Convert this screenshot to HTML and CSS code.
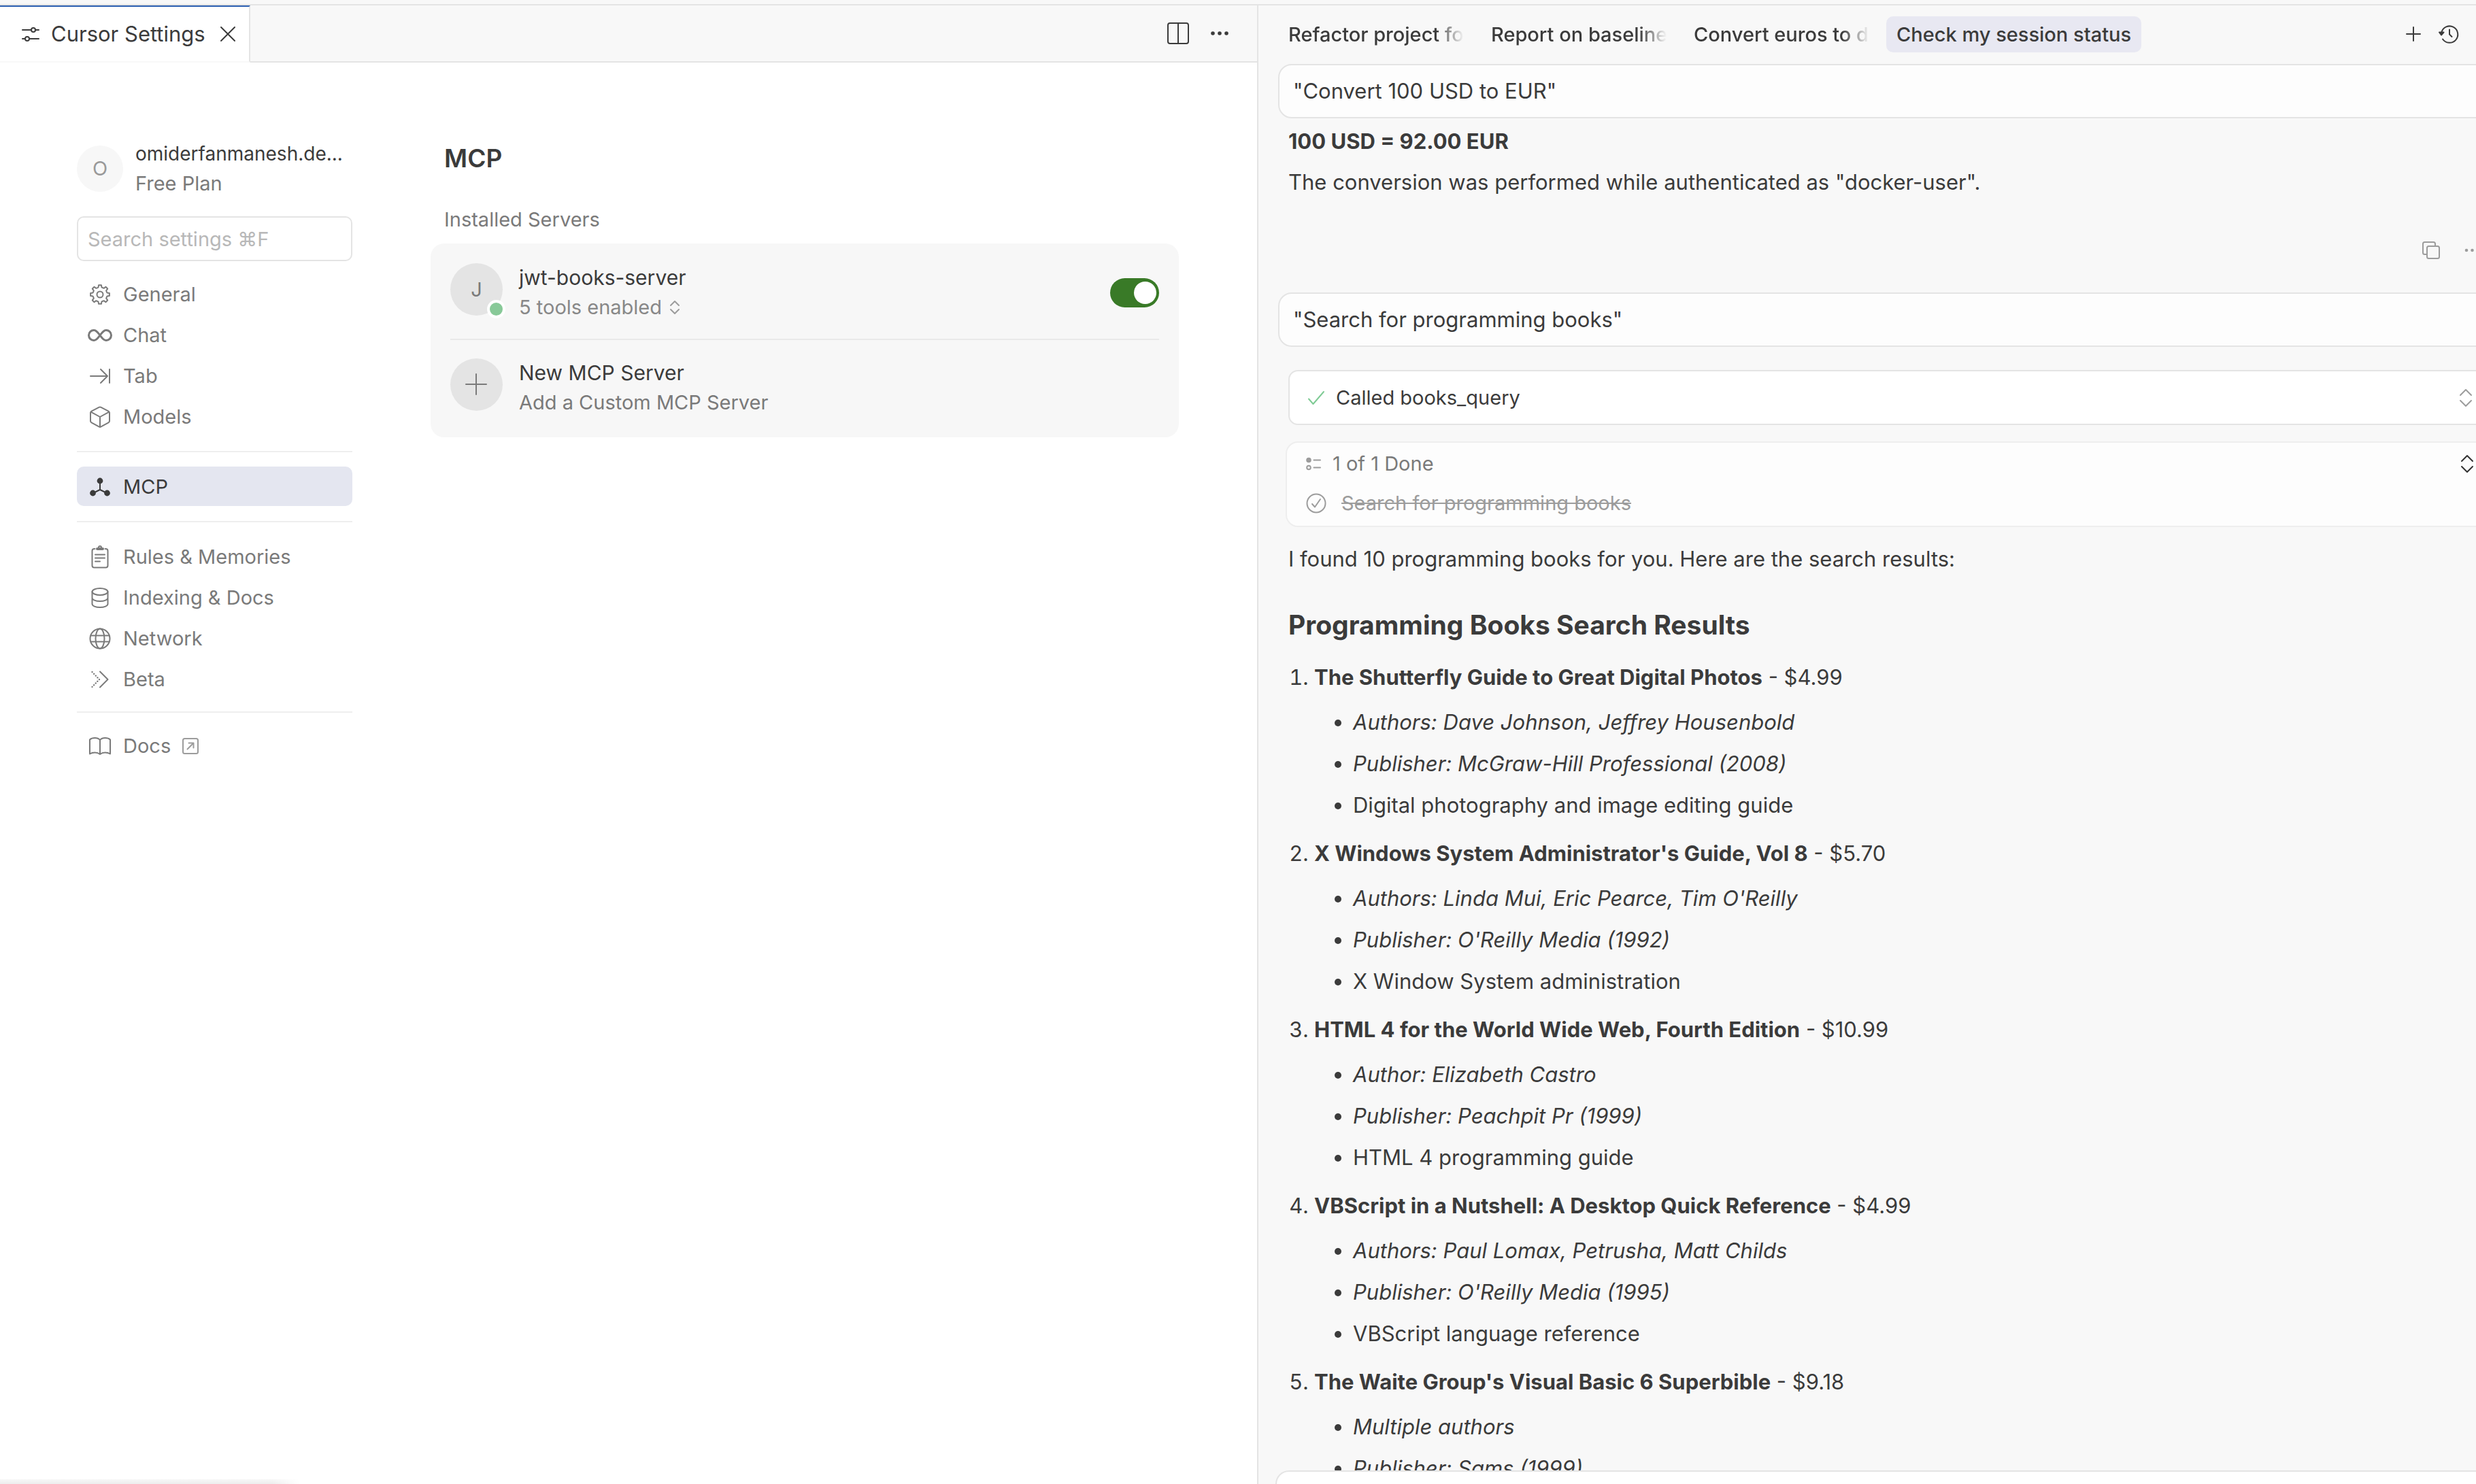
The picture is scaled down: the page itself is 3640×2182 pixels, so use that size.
FILE: index.html
```html
<!DOCTYPE html>
<html lang="en">
<head>
<meta charset="utf-8">
<title>Cursor Settings</title>
<link rel="stylesheet" href="styles.css">
</head>
<body>
<div class="titlebar"></div>
<div class="workbench">
  <section class="editor">
    <header class="tabbar">
      <div class="tab">
        <svg class="icon" width="26" height="26" viewBox="0 0 26 26"><path d="M1 7h13M20 7h5M1 20h4M11 20h14"/><circle cx="17" cy="7" r="3"/><circle cx="8" cy="20" r="3"/></svg>
        <span>Cursor Settings</span>
        <button class="icon-btn" aria-label="Close tab"><svg class="icon" width="22" height="22" viewBox="0 0 22 22"><path d="M1 1l20 20M21 1L1 21"/></svg></button>
      </div>
      <div class="tab-actions">
        <button class="icon-btn" aria-label="Split editor"><svg class="icon" width="32" height="32" viewBox="0 0 32 32"><rect x="1" y="1" width="30" height="30" rx="3"/><path d="M16 1v30"/></svg></button>
        <button class="icon-btn" aria-label="More actions"><svg class="icon-fill" width="28" height="8" viewBox="0 0 28 8"><circle cx="4" cy="4" r="2.800"/><circle cx="14" cy="4" r="2.800"/><circle cx="24" cy="4" r="2.800"/></svg></button>
      </div>
    </header>
    <div class="settings">
      <aside class="sidebar">
        <div class="profile">
          <div class="avatar">O</div>
          <div class="profile-text">
            <div class="profile-name">omiderfanmanesh.de...</div>
            <div class="profile-plan">Free Plan</div>
          </div>
        </div>
        <input class="search" type="text" placeholder="Search settings ⌘F" aria-label="Search settings">
        <nav class="nav">
          <a class="nav-item" href="#general"><span class="nav-icon"><svg class="icon" width="30" height="30" viewBox="0 0 30 30"><path d="M12.57 4.48L13.05 1.14H16.95L17.43 4.48Q19.5 5.6 20.72 5.84L23.43 3.82L26.18 6.57L24.16 9.28Q24.5 11 25.52 12.57L28.86 13.05V16.95L25.52 17.43Q24.4 19.5 24.16 20.72L26.18 23.43L23.43 26.18L20.72 24.16Q19 24.5 17.43 25.52L16.95 28.86H13.05L12.57 25.52Q10.5 24.4 9.28 24.16L6.57 26.18L3.82 23.43L5.84 20.72Q5.5 19 4.48 17.43L1.14 16.95V13.05L4.48 12.57Q5.6 10.5 5.84 9.28L3.82 6.57L6.57 3.82L9.28 5.84Q11 5.5 12.57 4.48Z"/><circle cx="15" cy="15" r="4.5"/></svg></span>General</a>
          <a class="nav-item" href="#chat"><span class="nav-icon"><svg class="icon icon-heavy" width="36" height="20" viewBox="0 0 36 20"><path d="M18 10C14.5 5.500 12.500 2.500 9 2.500C5 2.500 1.500 5.500 1.500 10S5 17.500 9 17.500C12.500 17.500 14.500 14.500 18 10C21.500 5.500 23.500 2.500 27 2.500C31 2.500 34.500 5.500 34.500 10S31 17.500 27 17.500C23.500 17.500 21.500 14.500 18 10Z"/></svg></span>Chat</a>
          <a class="nav-item" href="#tab"><span class="nav-icon"><svg class="icon" width="30" height="24" viewBox="0 0 30 24"><path d="M1 12h25M16 2l10 10-10 10M29 2v20"/></svg></span>Tab</a>
          <a class="nav-item" href="#models"><span class="nav-icon"><svg class="icon" width="30" height="32" viewBox="0 0 30 32"><path d="M13.500 1.800L2.500 7.600Q1 8.500 1 10V22Q1 23.500 2.500 24.400L13.500 30.400Q15 31.200 16.500 30.400L27.500 24.400Q29 23.500 29 22V10Q29 8.500 27.500 7.600L16.500 1.800Q15 1 13.500 1.800ZM2 8.800L15 16L28 8.800M15 16V31"/></svg></span>Models</a>
          <hr class="rule">
          <a class="nav-item nav-item-active" href="#mcp"><span class="nav-icon"><svg class="icon-node" width="30" height="28" viewBox="0 0 30 28"><path d="M15 5v13M15 18l-10 5M15 18l10 5"/><circle cx="15" cy="5" r="3.400"/><circle cx="4.500" cy="23" r="3.400"/><circle cx="25.500" cy="23" r="3.400"/></svg></span>MCP</a>
          <hr class="rule">
          <a class="nav-item" href="#rules"><span class="nav-icon"><svg class="icon" width="26" height="34" viewBox="0 0 26 34"><path d="M5.500 5H4.500Q1.500 5 1.500 8V29.500Q1.500 32.500 4.500 32.500H21.500Q24.500 32.500 24.500 29.500V8Q24.500 5 21.500 5H20.500M6 13.500h14M6 18.500h14M6 23.500h7"/><path d="M9 5h8" stroke-width="4"/><circle cx="13" cy="3" r="2"/></svg></span>Rules &amp; Memories</a>
          <a class="nav-item" href="#indexing"><span class="nav-icon"><svg class="icon" width="26" height="30" viewBox="0 0 26 30"><ellipse cx="13" cy="6" rx="11.500" ry="5"/><path d="M1.500 6V24C1.500 26.800 6.600 29 13 29S24.500 26.800 24.500 24V6M1.500 15C1.500 17.800 6.600 20 13 20S24.500 17.800 24.500 15"/></svg></span>Indexing &amp; Docs</a>
          <a class="nav-item" href="#network"><span class="nav-icon"><svg class="icon" width="32" height="32" viewBox="0 0 32 32"><circle cx="16" cy="16" r="14.500"/><ellipse cx="16" cy="16" rx="6.500" ry="14.500"/><path d="M2.500 11.500h27M2.500 20.500h27"/></svg></span>Network</a>
          <a class="nav-item" href="#beta"><span class="nav-icon"><svg class="icon" width="26" height="26" viewBox="0 0 26 26"><path d="M13 1.500L24.500 13L13 24.500"/><path d="M1.500 2L12 13L1.500 24" stroke-width="2.400" stroke-dasharray="0.100 3.700"/></svg></span>Beta</a>
          <hr class="rule rule-tight">
          <a class="nav-item" href="#docs"><span class="nav-icon"><svg class="icon" width="32" height="26" viewBox="0 0 32 26"><path d="M16 4Q13.500 1 8.500 1T1 3.500V24.500Q4 22.500 8.500 22.500T16 25Q19 22.500 23.500 22.500T31 24.500V3.500Q28.500 1 23.500 1T16 4V25"/></svg></span>Docs <svg class="icon icon-faint" width="24" height="24" viewBox="0 0 24 24"><rect x="1" y="1" width="22" height="22" rx="2.500"/><path d="M7.500 16.500L16 8M9.500 7.500H16.500V14.500"/></svg></a>
        </nav>
      </aside>
      <main class="content">
        <h1 class="title">MCP</h1>
        <h2 class="subtitle">Installed Servers</h2>
        <div class="card">
          <div class="server">
            <div class="server-avatar">J<span class="status-dot"></span></div>
            <div class="server-text">
              <div class="server-name">jwt-books-server</div>
              <button class="server-sub server-tools">5 tools enabled <svg class="icon icon-faint" width="14" height="20" viewBox="0 0 14 20"><path d="M1 7l6-6 6 6M1 13l6 6 6-6"/></svg></button>
            </div>
            <input class="toggle" type="checkbox" role="switch" aria-label="Enable jwt-books-server" checked>
          </div>
          <div class="server">
            <div class="server-avatar"><svg class="icon" width="32" height="32" viewBox="0 0 32 32"><path d="M15 0v30M0 15h30"/></svg></div>
            <div class="server-text">
              <div class="server-name">New MCP Server</div>
              <div class="server-sub">Add a Custom MCP Server</div>
            </div>
          </div>
        </div>
      </main>
    </div>
    <div class="hover-shadow"></div>
  </section>

  <section class="chat">
    <header class="chat-tabs">
      <button class="chat-tab"><span class="fade">Refactor project fo</span></button>
      <button class="chat-tab"><span class="fade">Report on baseline</span></button>
      <button class="chat-tab"><span class="fade">Convert euros to d</span></button>
      <button class="chat-tab chat-tab-active">Check my session status</button>
      <div class="chat-actions">
        <button class="icon-btn" aria-label="New chat"><svg class="icon" width="22" height="22" viewBox="0 0 22 22"><path d="M11 1v20M1 11h20"/></svg></button>
        <button class="icon-btn" aria-label="Chat history"><svg class="icon" width="30" height="28" viewBox="0 0 30 28"><path d="M4.300 11.500A12.200 12.200 0 1 1 6 21.500M16 7.500V14.500L19.500 18"/><path class="arrow" d="M1 11.500H7.500L4 15.500Z"/></svg></button>
      </div>
    </header>
    <div class="stream">
      <div class="prompt">"Convert 100 USD to EUR"</div>
      <div class="answer">
        <p><strong>100 USD = 92.00 EUR</strong></p>
        <p>The conversion was performed while authenticated as "docker-user".</p>
      </div>
      <div class="answer-actions">
        <button class="icon-btn" aria-label="Copy"><svg class="icon icon-faint" width="26" height="26" viewBox="0 0 26 26"><rect x="7" y="7" width="18" height="18" rx="2.500"/><path d="M7 19H3.500Q1 19 1 16.500V3.500Q1 1 3.500 1H16.500Q19 1 19 3.500V7"/></svg></button>
        <button class="icon-btn" aria-label="More"><svg class="icon-fill icon-faint" width="24" height="8" viewBox="0 0 24 8"><circle cx="3" cy="4" r="2.300"/><circle cx="11.500" cy="4" r="2.300"/><circle cx="20" cy="4" r="2.300"/></svg></button>
      </div>
      <div class="prompt">"Search for programming books"</div>
      <div class="tool-call">
        <svg class="icon icon-ok" width="24" height="20" viewBox="0 0 24 20"><path d="M1 11.500L7.500 19L23 1"/></svg>
        <span>Called books_query</span>
        <button class="icon-btn push" aria-label="Expand tool call"><svg class="icon icon-faint" width="18" height="26" viewBox="0 0 18 26"><path d="M1 9l8-8 8 8M1 17l8 8 8-8"/></svg></button>
      </div>
      <div class="todo">
        <div class="todo-row todo-head">
          <svg class="icon icon-faint" width="22" height="20" viewBox="0 0 22 20"><circle class="solid" cx="4" cy="4.500" r="2.800"/><circle cx="4" cy="15.500" r="2.800"/><path d="M11.500 4.500h9.500M11.500 15.500h9.500"/></svg>
          <span>1 of 1 Done</span>
          <button class="icon-btn push" aria-label="Collapse to-do list"><svg class="icon icon-dark" width="18" height="26" viewBox="0 0 18 26"><path d="M1 9l8-8 8 8M1 17l8 8 8-8"/></svg></button>
        </div>
        <div class="todo-row todo-done">
          <svg class="icon" width="30" height="30" viewBox="0 0 30 30"><circle cx="15" cy="15" r="13.500"/><path d="M9 16l4 4.500 8-11.500"/></svg>
          <s>Search for programming books</s>
        </div>
      </div>
      <div class="answer answer-long">
        <p>I found 10 programming books for you. Here are the search results:</p>
        <h3>Programming Books Search Results</h3>
        <ol>
          <li><strong>The Shutterfly Guide to Great Digital Photos</strong> - $4.99
            <ul><li><em>Authors: Dave Johnson, Jeffrey Housenbold</em></li><li><em>Publisher: McGraw-Hill Professional (2008)</em></li><li>Digital photography and image editing guide</li></ul></li>
          <li><strong>X Windows System Administrator's Guide, Vol 8</strong> - $5.70
            <ul><li><em>Authors: Linda Mui, Eric Pearce, Tim O'Reilly</em></li><li><em>Publisher: O'Reilly Media (1992)</em></li><li>X Window System administration</li></ul></li>
          <li><strong>HTML 4 for the World Wide Web, Fourth Edition</strong> - $10.99
            <ul><li><em>Author: Elizabeth Castro</em></li><li><em>Publisher: Peachpit Pr (1999)</em></li><li>HTML 4 programming guide</li></ul></li>
          <li><strong>VBScript in a Nutshell: A Desktop Quick Reference</strong> - $4.99
            <ul><li><em>Authors: Paul Lomax, Petrusha, Matt Childs</em></li><li><em>Publisher: O'Reilly Media (1995)</em></li><li>VBScript language reference</li></ul></li>
          <li><strong>The Waite Group's Visual Basic 6 Superbible</strong> - $9.18
            <ul><li><em>Multiple authors</em></li><li><em>Publisher: Sams (1999)</em></li></ul></li>
        </ol>
      </div>
    </div>
    <div class="composer"></div>
  </section>
</div>
</body>
</html>
```
FILE: styles.css
```css
:root {
  --text: #3b3b3b;
  --muted: #7a7a7a;
  --faint: #9c9c9c;
  --line: #e4e4e4;
  --panel: #f8f8f8;
  --select: #e4e6f0;
}

* { box-sizing: border-box; }

body {
  margin: 0;
  height: 100vh;
  display: flex;
  flex-direction: column;
  overflow: hidden;
  background: #fff;
  color: var(--text);
  font: 400 31px/60px Inter, sans-serif;
}

h1, h2, h3, p, ol, ul { margin: 0; padding: 0; }

button {
  border: 0;
  padding: 0;
  background: none;
  color: inherit;
  font: inherit;
  text-align: left;
}

svg { display: block; flex: none; overflow: visible; }

.icon {
  fill: none;
  stroke: currentColor;
  stroke-width: 2;
  stroke-linecap: round;
  stroke-linejoin: round;
}
.icon-heavy { stroke-width: 3; }
.icon-fill { fill: currentColor; }
.icon-faint { color: var(--faint); }
.icon-dark { color: #333; }
.icon-ok { color: #7fcb95; }
.icon .arrow, .icon .solid { fill: currentColor; }
.icon-node { fill: currentColor; stroke: currentColor; stroke-width: 2; }
.icon-btn { display: flex; align-items: center; }
.push { margin-left: auto; }

.titlebar {
  height: 8px;
  flex: none;
  background: var(--panel);
  border-bottom: 2px solid var(--line);
}

.workbench {
  flex: 1;
  min-height: 0;
  display: grid;
  grid-template-columns: minmax(0, 1850fr) minmax(0, 1790fr);
}

/* Editor side */
.editor {
  position: relative;
  min-height: 0;
  border-right: 2px solid var(--line);
}

.tabbar {
  height: 84px;
  display: flex;
  background: var(--panel);
}
.tab {
  display: flex;
  align-items: center;
  padding: 0 20px 0 32px;
  background: #fff;
  border-top: 2px solid #2a5db0;
  border-right: 2px solid var(--line);
  border-bottom: 2px solid var(--panel);
}
.tab span { margin: 0 22px 0 17px; }
.tab-actions {
  flex: 1;
  display: flex;
  align-items: center;
  justify-content: flex-end;
  gap: 31px;
  padding-right: 41px;
  border-bottom: 2px solid var(--line);
}

.settings {
  display: flex;
  gap: 115px;
  padding: 113px 115px 0 113px;
  font-size: 29px;
}

.sidebar { flex: none; width: 405px; }
.profile {
  display: flex;
  align-items: center;
  gap: 18px;
  line-height: 43px;
  white-space: nowrap;
}
.avatar {
  width: 68px;
  height: 68px;
  flex: none;
  border-radius: 50%;
  background: #f7f7f7;
  color: #999;
  line-height: 68px;
  text-align: center;
}
.profile-name { font-size: 28px; }
.profile-plan { color: var(--muted); }

.search {
  display: block;
  width: 100%;
  height: 66px;
  margin: 27px 0 19px;
  padding: 0 14px;
  border: 2px solid var(--line);
  border-radius: 10px;
  background: #fff;
  color: var(--text);
  font: inherit;
}
.search::placeholder { color: #b8b8b8; opacity: 1; }

.nav { display: flex; flex-direction: column; gap: 2px; }
.nav-item {
  height: 58px;
  display: flex;
  align-items: center;
  gap: 17px;
  padding: 2px 17px 0;
  border-radius: 10px;
  color: var(--muted);
  text-decoration: none;
}
.nav-item-active { background: var(--select); color: var(--text); }
.nav-icon { width: 34px; display: flex; justify-content: center; }
.rule {
  width: 100%;
  height: 2px;
  margin: 20px 0 19px;
  border: 0;
  background: #eee;
}
.rule-tight { margin: 17px 0; }

.content { flex: 1; min-width: 0; padding-top: 4px; }
.title {
  margin: 0 20px 46px;
  font: 600 37px/48px Inter, sans-serif;
}
.subtitle {
  margin: 0 20px 15px;
  color: var(--muted);
  font: 400 29px/40px Inter, sans-serif;
}
.card {
  padding: 0 29px;
  border-radius: 20px;
  background: #f7f7f7;
}
.server {
  display: flex;
  align-items: center;
  gap: 24px;
  padding: 27px 0 30px;
}
.server:first-child {
  padding: 29px 0 25px;
  border-bottom: 2px solid #e9e9e9;
}
.server-avatar {
  position: relative;
  align-self: flex-start;
  width: 77px;
  height: 77px;
  flex: none;
  display: flex;
  align-items: center;
  justify-content: center;
  border-radius: 50%;
  background: #e4e4e4;
  color: var(--muted);
}
.status-dot {
  position: absolute;
  right: -4px;
  bottom: -4px;
  width: 27px;
  height: 27px;
  border: 4px solid #fff;
  border-radius: 50%;
  background: #88c998;
}
.server-text { flex: 1; line-height: 43px; }
.server-name { font-size: 30px; }
.server-sub { color: var(--muted); }
.server-tools { display: flex; align-items: center; gap: 12px; color: #888; }

.toggle {
  appearance: none;
  width: 72px;
  height: 43px;
  margin: 0;
  padding: 5px 4px;
  display: flex;
  justify-content: flex-end;
  border-radius: 22px;
  background: #397a27;
}
.toggle::before {
  content: "";
  width: 33px;
  height: 33px;
  border-radius: 50%;
  background: #fff;
}

.hover-shadow {
  position: absolute;
  left: 0;
  bottom: 0;
  width: 440px;
  height: 7px;
  background: linear-gradient(#f7f7f7, #ededed);
  mask-image: linear-gradient(to left, transparent, #000 40px);
}

/* Chat side */
.chat {
  min-height: 0;
  display: flex;
  flex-direction: column;
  overflow: hidden;
  background: var(--panel);
}

.chat-tabs {
  height: 84px;
  flex: none;
  display: flex;
  align-items: center;
  gap: 10px;
  padding: 0 25px 0 29px;
  font-size: 29px;
  font-weight: 500;
  line-height: 53px;
  white-space: nowrap;
}
.chat-tab { padding: 0 15px; border-radius: 10px; }
.chat-tab-active { background: #e8e8f2; }
.fade {
  display: block;
  width: 258px;
  overflow: hidden;
  mask-image: linear-gradient(to left, transparent, #000 40px);
}
.chat-actions { display: flex; gap: 26px; margin-left: auto; }

.stream {
  flex: 1;
  min-height: 0;
  margin-right: -30px;
  padding: 2px 0 0 29px;
  overflow: hidden;
}

.prompt {
  height: 80px;
  padding: 0 20px;
  border: 2px solid var(--line);
  border-radius: 20px;
  background: #fdfdfd;
  line-height: 76px;
}

.answer { padding: 4px 15px 0; }
.answer strong { font-weight: 700; }

.answer-actions {
  height: 40px;
  margin: 50px 0 42px;
  padding-right: 23px;
  display: flex;
  justify-content: flex-end;
  gap: 36px;
}

.tool-call {
  height: 81px;
  margin: 34px 0 24px 15px;
  padding: 0 34px 0 27px;
  display: flex;
  align-items: center;
  gap: 17px;
  border: 2px solid var(--line);
  border-radius: 14px;
  background: #fff;
  font-size: 29px;
}

.todo {
  margin: 0 0 13px 11px;
  padding: 2px 32px 4px 28px;
  border: 2px solid #eee;
  border-radius: 18px;
  background: #fdfdfd;
  font-size: 29px;
  line-height: 58px;
}
.todo-row { display: flex; align-items: center; }
.todo-head { gap: 17px; color: var(--muted); }
.todo-done { gap: 22px; color: var(--faint); }

.answer-long h3 {
  margin: 37px 0 16px;
  font: 700 39px/60px Inter, sans-serif;
}
.answer-long ol { padding-left: 38px; line-height: 61px; }
.answer-long ul { padding: 5px 0 10px 57px; list-style: disc; }

.composer {
  height: 20px;
  flex: none;
  margin: 0 -30px 0 25px;
  border: 2px solid var(--line);
  border-bottom: 0;
  border-radius: 20px 20px 0 0;
  background: #fff;
}
```
